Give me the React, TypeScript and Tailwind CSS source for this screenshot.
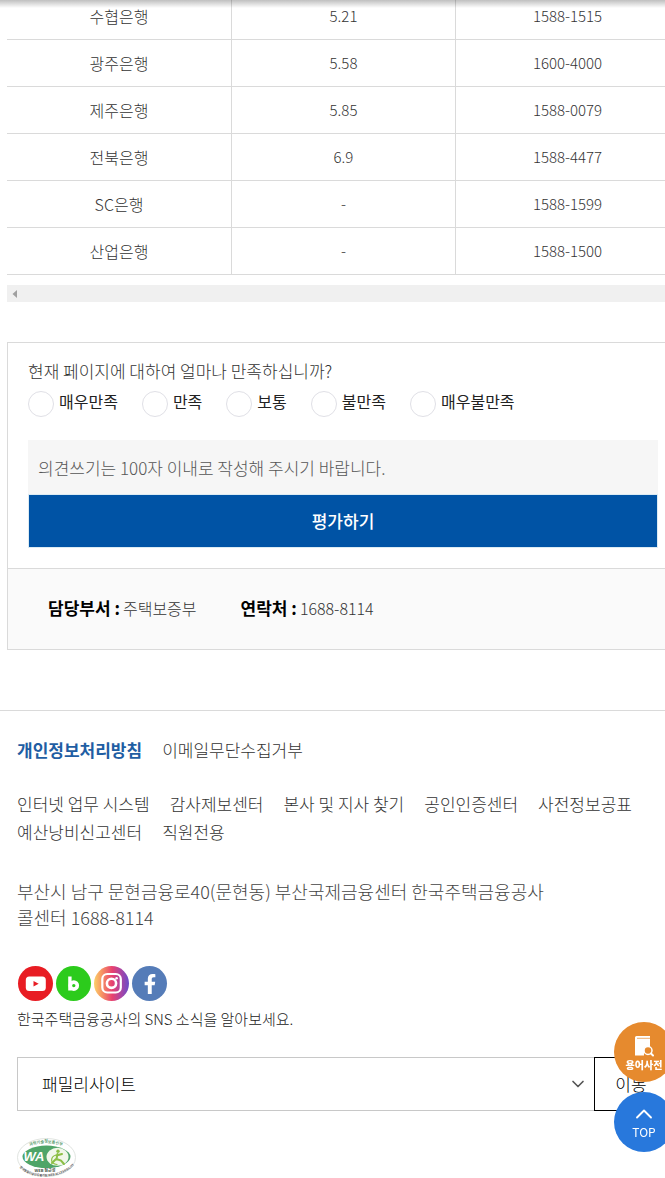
import { ChevronDown, ChevronUp } from "lucide-react";
import { FaFacebookF } from "react-icons/fa";

const banks = [
  { name: "수협은행", rate: "5.21", phone: "1588-1515" },
  { name: "광주은행", rate: "5.58", phone: "1600-4000" },
  { name: "제주은행", rate: "5.85", phone: "1588-0079" },
  { name: "전북은행", rate: "6.9", phone: "1588-4477" },
  { name: "SC은행", rate: "-", phone: "1588-1599" },
  { name: "산업은행", rate: "-", phone: "1588-1500" },
];

const ratings = ["매우만족", "만족", "보통", "불만족", "매우불만족"];

const siteLinks = [
  "인터넷 업무 시스템",
  "감사제보센터",
  "본사 및 지사 찾기",
  "공인인증센터",
  "사전정보공표",
  "예산낭비신고센터",
  "직원전용",
];

function RateTable() {
  return (
    <div>
      <table className="-mt-[7px] w-full table-fixed border-separate border-spacing-0 text-center font-light text-[#333]">
        <tbody>
          {banks.map((bank) => (
            <tr key={bank.name}>
              <td className="h-[47px] border-b border-[#dadada] text-base">{bank.name}</td>
              <td className="h-[47px] border-b border-l border-[#dadada] text-[15px]">{bank.rate}</td>
              <td className="h-[47px] border-b border-l border-[#dadada] text-[15px]">{bank.phone}</td>
            </tr>
          ))}
        </tbody>
      </table>
      <div className="mt-[10px] flex h-[17px] items-center bg-[#f0f0f0] pl-[5px]">
        <svg className="h-2 w-[5px]" viewBox="0 0 5 8" aria-hidden="true">
          <path d="M5 0v8L0.5 4z" fill="#a0a0a0" />
        </svg>
      </div>
    </div>
  );
}

function Survey() {
  return (
    <section className="mt-10 border border-[#dadada]">
      <form className="px-5 pt-4 pb-5" onSubmit={(e) => e.preventDefault()}>
        <fieldset>
          <legend className="text-[17px] leading-6 font-light text-[#333]">
            현재 페이지에 대하여 얼마나 만족하십니까?
          </legend>
          <div className="mt-2 flex flex-wrap gap-x-6">
            {ratings.map((rating) => (
              <label key={rating} className="flex items-start gap-[5px] text-base leading-5 text-[#222]">
                <input
                  type="radio"
                  name="satisfaction"
                  className="size-[26px] appearance-none rounded-full border border-[#e0e0e6] bg-white checked:border-8 checked:border-[#0053a5]"
                />
                {rating}
              </label>
            ))}
          </div>
        </fieldset>
        <input
          type="text"
          aria-label="의견쓰기"
          placeholder="의견쓰기는 100자 이내로 작성해 주시기 바랍니다."
          className="mt-[23px] block h-[54px] w-full bg-[#f6f6f6] px-[10px] text-[17px] font-light placeholder:text-[#555]"
        />
        <button
          type="submit"
          className="block h-[54px] w-full border border-[#dcebf3] bg-[#0053a5] text-[17px] font-medium text-white"
        >
          평가하기
        </button>
      </form>
      <dl className="flex h-[81px] items-center gap-11 border-t border-[#dadada] bg-[#fafafa] px-10 pb-0.5">
        <div className="flex items-baseline gap-[3px]">
          <dt className="text-[17px] font-bold text-black">담당부서 :</dt>
          <dd className="text-base font-light text-[#333]">주택보증부</dd>
        </div>
        <div className="flex items-baseline gap-[3px]">
          <dt className="text-[17px] font-bold text-black">연락처 :</dt>
          <dd className="text-base font-light text-[#333]">1688-8114</dd>
        </div>
      </dl>
    </section>
  );
}

function SocialLinks() {
  const circle = "flex size-[35px] items-center justify-center rounded-full";
  return (
    <div className="mt-[35px] flex gap-[3px] pl-px">
      <a href="#youtube" aria-label="유튜브" className={`${circle} bg-[#e81c23]`}>
        <svg viewBox="0 0 35 35" className="size-[35px]">
          <rect x="7.8" y="10.500" width="20" height="14.500" rx="3.500" fill="#fff" />
          <path d="M15.500 15v5.400l5.200-2.700z" fill="#e81c23" />
        </svg>
      </a>
      <a href="#blog" aria-label="블로그" className={`${circle} bg-[#2ccb1c]`}>
        <svg viewBox="0 0 35 35" className="size-[35px]">
          <path d="M13.900 10.500v14" stroke="#fff" strokeWidth="3.400" />
          <circle cx="17.800" cy="19.600" r="3.500" fill="none" stroke="#fff" strokeWidth="3.600" />
        </svg>
      </a>
      <a
        href="#instagram"
        aria-label="인스타그램"
        className={`${circle} bg-[linear-gradient(90deg,#fbd06a_0%,#f79a62_20%,#e8416f_52%,#a845a5_78%,#6a4cc8_100%)]`}
      >
        <svg viewBox="0 0 35 35" className="size-[35px]" fill="none" stroke="#fff">
          <rect x="8.300" y="8" width="18.500" height="18.500" rx="5" strokeWidth="2.200" />
          <circle cx="17.500" cy="17.300" r="4.600" strokeWidth="2.600" />
          <circle cx="22.600" cy="12.200" r="1.300" fill="#fff" stroke="none" />
        </svg>
      </a>
      <a href="#facebook" aria-label="페이스북" className={`${circle} bg-[#557cb8]`}>
        <FaFacebookF className="size-5 text-white" />
      </a>
    </div>
  );
}

function AccessibilityMark() {
  return (
    <svg className="mt-[27px] h-10 w-[62px]" viewBox="0 0 62 40" role="img" aria-label="웹 접근성 인증">
      <defs>
        <path id="mark-top" d="M7 12C15 3 43 3 51 12" />
        <path id="mark-bottom" d="M1 27C10 42.500 46 42.500 59 25" />
      </defs>
      <ellipse cx="29.500" cy="19.500" rx="29" ry="19" fill="#fff" stroke="#d8ddd8" strokeWidth="0.800" />
      <ellipse cx="29.500" cy="18.800" rx="24" ry="11.200" fill="#4fa568" />
      <ellipse cx="40.500" cy="18.800" rx="11" ry="9" fill="#f1f7ea" />
      <text x="6.500" y="23.300" fill="#fff" fontSize="13" fontWeight="900" fontStyle="italic" fontFamily="Liberation Sans, sans-serif">
        WA
      </text>
      <g stroke="#8cbf45" fill="none" strokeLinecap="round">
        <circle cx="41" cy="13.300" r="1.700" fill="#8cbf45" stroke="none" />
        <path d="M40.500 16l-1 5 4.500 1.500 3 3.500M39.500 17.500l5.500-1.500M39 21l-4 4" strokeWidth="2" />
        <path d="M39 17c-6 2-6 9 1 9.500" strokeWidth="1.200" />
      </g>
      <text fill="#65a377" fontSize="4" fontWeight="700" textAnchor="middle">
        <textPath href="#mark-top" startOffset="50%">과학기술정보통신부</textPath>
      </text>
      <text x="28" y="34" fill="#3f4f3f" fontSize="4" fontWeight="700" textAnchor="middle">
        WEB 접근성
      </text>
      <text fill="#555" fontSize="3" fontWeight="700" textAnchor="middle">
        <textPath href="#mark-bottom" startOffset="50%">한국웹접근성인증평가원 WEB ACCESSIBILITY</textPath>
      </text>
    </svg>
  );
}

function Footer() {
  return (
    <footer className="mt-[60px] border-t border-[#dadada] pt-[25px] pl-[17px] text-[17px] leading-7 text-[#333]">
      <nav className="flex gap-5">
        <a href="#privacy" className="font-bold text-[#1f5ea3]">개인정보처리방침</a>
        <a href="#email" className="font-light">이메일무단수집거부</a>
      </nav>
      <nav className="mt-[26px] flex flex-wrap gap-x-5 font-light">
        {siteLinks.map((link) => (
          <a key={link} href="#site">{link}</a>
        ))}
      </nav>
      <address className="mt-8 text-lg leading-[26px] font-light text-[#444] not-italic">
        부산시 남구 문현금융로40(문현동) 부산국제금융센터 한국주택금융공사
        <br />
        콜센터 1688-8114
      </address>
      <div className="pt-px">
        <SocialLinks />
      </div>
      <p className="mt-1.5 text-[15px] leading-6 font-light text-[#222]">
        한국주택금융공사의 SNS 소식을 알아보세요.
      </p>
      <form className="mt-[26px] -mr-[3px] flex" onSubmit={(e) => e.preventDefault()}>
        <div className="relative grow">
          <select
            aria-label="패밀리사이트"
            className="h-[54px] w-full appearance-none border border-r-0 border-[#c8c8c8] bg-white px-6 text-[17px] font-light text-black"
          >
            <option>패밀리사이트</option>
          </select>
          <ChevronDown className="pointer-events-none absolute top-[17px] right-1.5 size-5 text-[#555]" />
        </div>
        <button type="submit" className="h-[54px] w-[74px] border border-black bg-white text-[17px] font-light text-black">
          이동
        </button>
      </form>
      <AccessibilityMark />
    </footer>
  );
}

function QuickButtons() {
  return (
    <div className="fixed -right-[9px] bottom-[26px] flex flex-col gap-[10px]">
      <a
        href="#dictionary"
        className="flex size-[60px] flex-col items-center rounded-full bg-[#e68a2e] pt-[13px] text-[10px] leading-4 font-black text-white"
      >
        <svg viewBox="0 0 20 22" className="h-[22px] w-5" aria-hidden="true">
          <path d="M1 2.500a1.500 1.500 0 0 1 1.500-1.500H16v12.500a6 6 0 0 0-6 7H1z" fill="#fff" />
          <path d="M3 3.300h13" stroke="#e68a2e" strokeWidth="0.700" />
          <circle cx="14" cy="15.500" r="4" fill="#e68a2e" stroke="#fff" strokeWidth="1.500" />
          <path d="M17 18.500l2 2" stroke="#fff" strokeWidth="2" strokeLinecap="round" />
        </svg>
        용어사전
      </a>
      <a
        href="#top"
        className="flex size-[60px] flex-col items-center rounded-full bg-[#2878dc] pt-2 text-xs leading-4 text-white"
      >
        <ChevronUp className="size-7 shrink-0" strokeWidth={1.6} />
        <span className="-mt-1">TOP</span>
      </a>
    </div>
  );
}

export default function App() {
  return (
    <div className="relative overflow-hidden bg-white font-['Noto_Sans_CJK_KR',sans-serif]">
      <div className="absolute inset-x-0 top-0 h-2 bg-linear-to-b from-black/25 to-transparent" />
      <main className="-mr-[14px] ml-[7px]">
        <RateTable />
        <Survey />
      </main>
      <Footer />
      <QuickButtons />
    </div>
  );
}
